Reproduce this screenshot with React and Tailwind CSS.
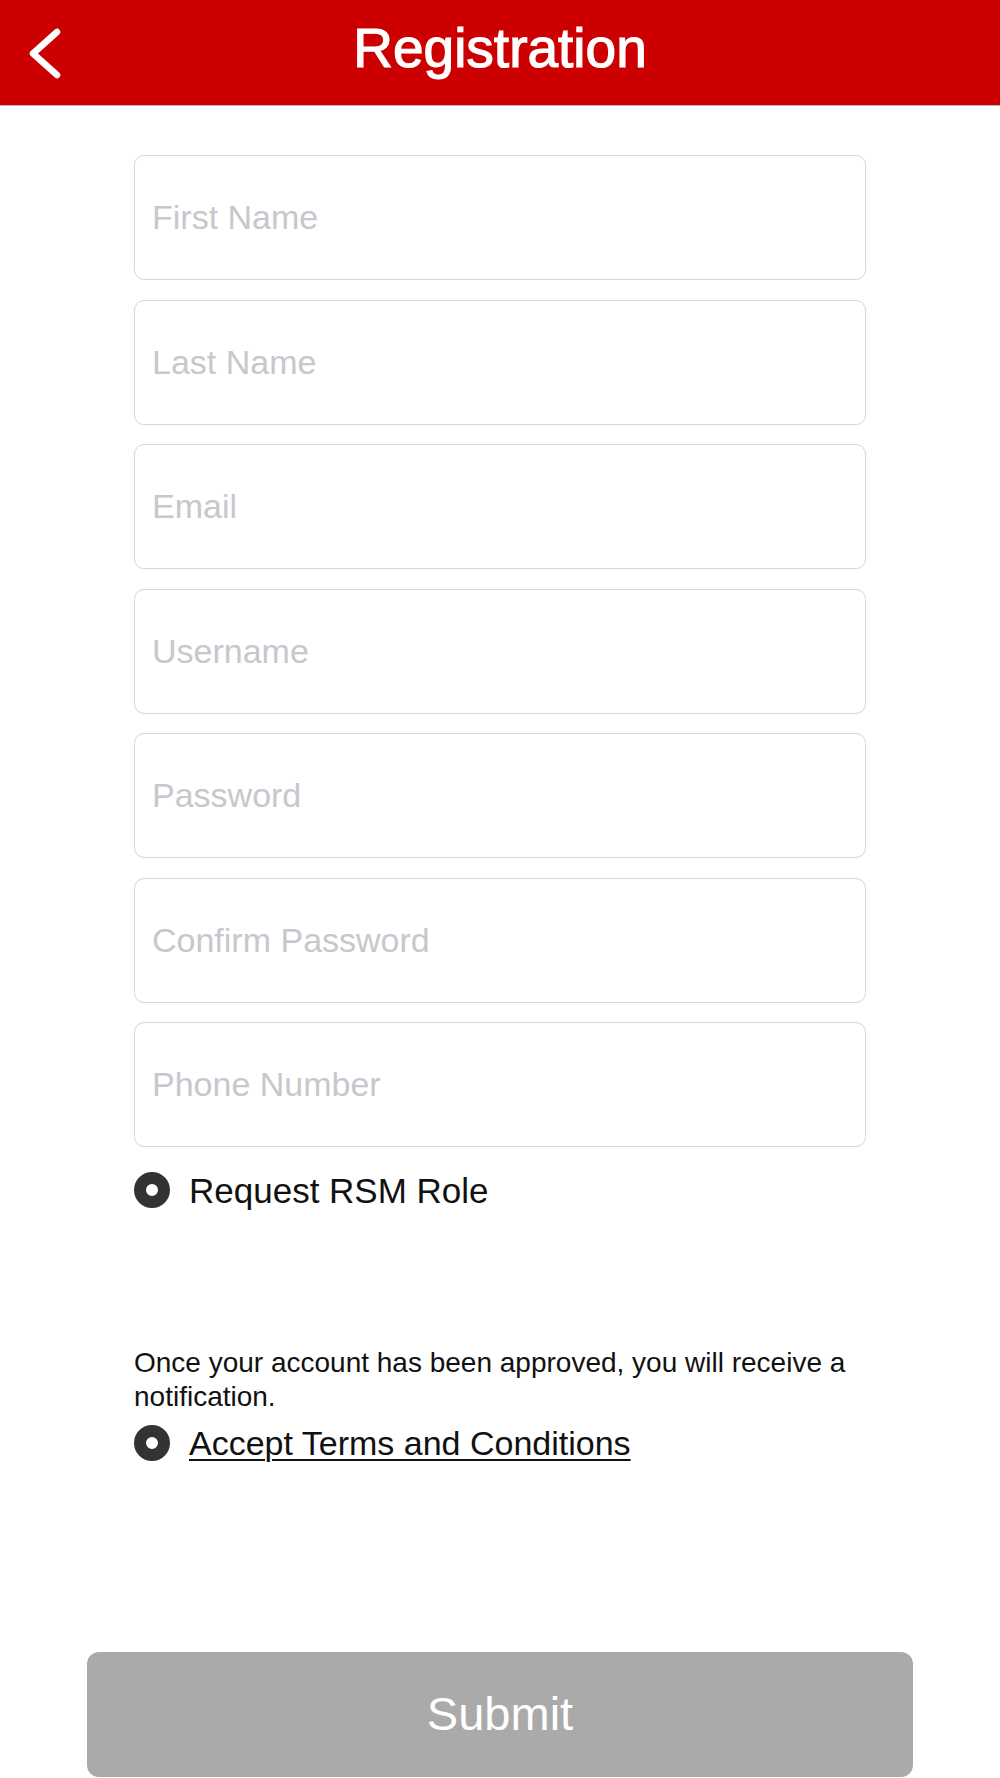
import { useState } from "react";

const FIELDS = [
  { name: "firstName", label: "First Name", type: "text" },
  { name: "lastName", label: "Last Name", type: "text" },
  { name: "email", label: "Email", type: "email" },
  { name: "username", label: "Username", type: "text" },
  { name: "password", label: "Password", type: "password" },
  { name: "confirm", label: "Confirm Password", type: "password" },
  { name: "phone", label: "Phone Number", type: "tel" },
];

function Radio() {
  return <div className="w-[36px] h-[36px] shrink-0 rounded-full border-[12px] border-[#333333] bg-white" />;
}

export default function App() {
  const [values, setValues] = useState({});

  return (
    <div className="min-h-[1778px] w-[1000px] bg-white text-[#111111]" style={{ fontFamily: '"Liberation Sans", Arial, sans-serif' }}>
      {/* header */}
      <header className="h-[106px] bg-[#cc0000] border-b border-[#b9b9b9] grid grid-cols-[100px_1fr_100px] items-center">
        <button className="h-full flex items-start">
          <svg width="100" height="105" viewBox="0 0 100 105" fill="none">
            <polyline points="57,32 33,53.5 57,75" stroke="#ffffff" strokeWidth="6.5" strokeLinecap="round" strokeLinejoin="round" />
          </svg>
        </button>
        <h1 className="text-center text-white text-[55px] leading-none pb-[8px] [-webkit-text-stroke:1.2px_#ffffff]">Registration</h1>
        <div />
      </header>

      <div className="px-[134px] pt-[49px] flex flex-col">
        <div className="flex flex-col gap-[19.5px]">
          {FIELDS.map(f => (
            <input
              key={f.name}
              type={f.type}
              placeholder={f.label}
              value={values[f.name] || ""}
              onChange={e => setValues({ ...values, [f.name]: e.target.value })}
              className="h-[125px] w-full rounded-[10px] border border-[#d6d6d6] px-[17px] text-[34px] text-[#111111] placeholder:text-[#c7c7cd] outline-none"
            />
          ))}
        </div>

        <div className="mt-[25px] h-[36px] flex items-center gap-[19px]">
          <Radio />
          <span className="text-[35px] leading-none">Request RSM Role</span>
        </div>

        <p className="mt-[138px] text-[28px] leading-[34px]">
          Once your account has been approved, you will receive a notification.
        </p>

        <div className="mt-[10px] h-[37px] flex items-center gap-[19px]">
          <Radio />
          <a href="#" className="text-[34px] leading-none underline underline-offset-[4px] decoration-[2px]">Accept Terms and Conditions</a>
        </div>
      </div>

      <div className="px-[87px] mt-[191px]">
        <button className="w-full h-[125px] rounded-[12px] bg-[#aaaaaa] text-white text-[47px] font-light">Submit</button>
      </div>
    </div>
  );
}
